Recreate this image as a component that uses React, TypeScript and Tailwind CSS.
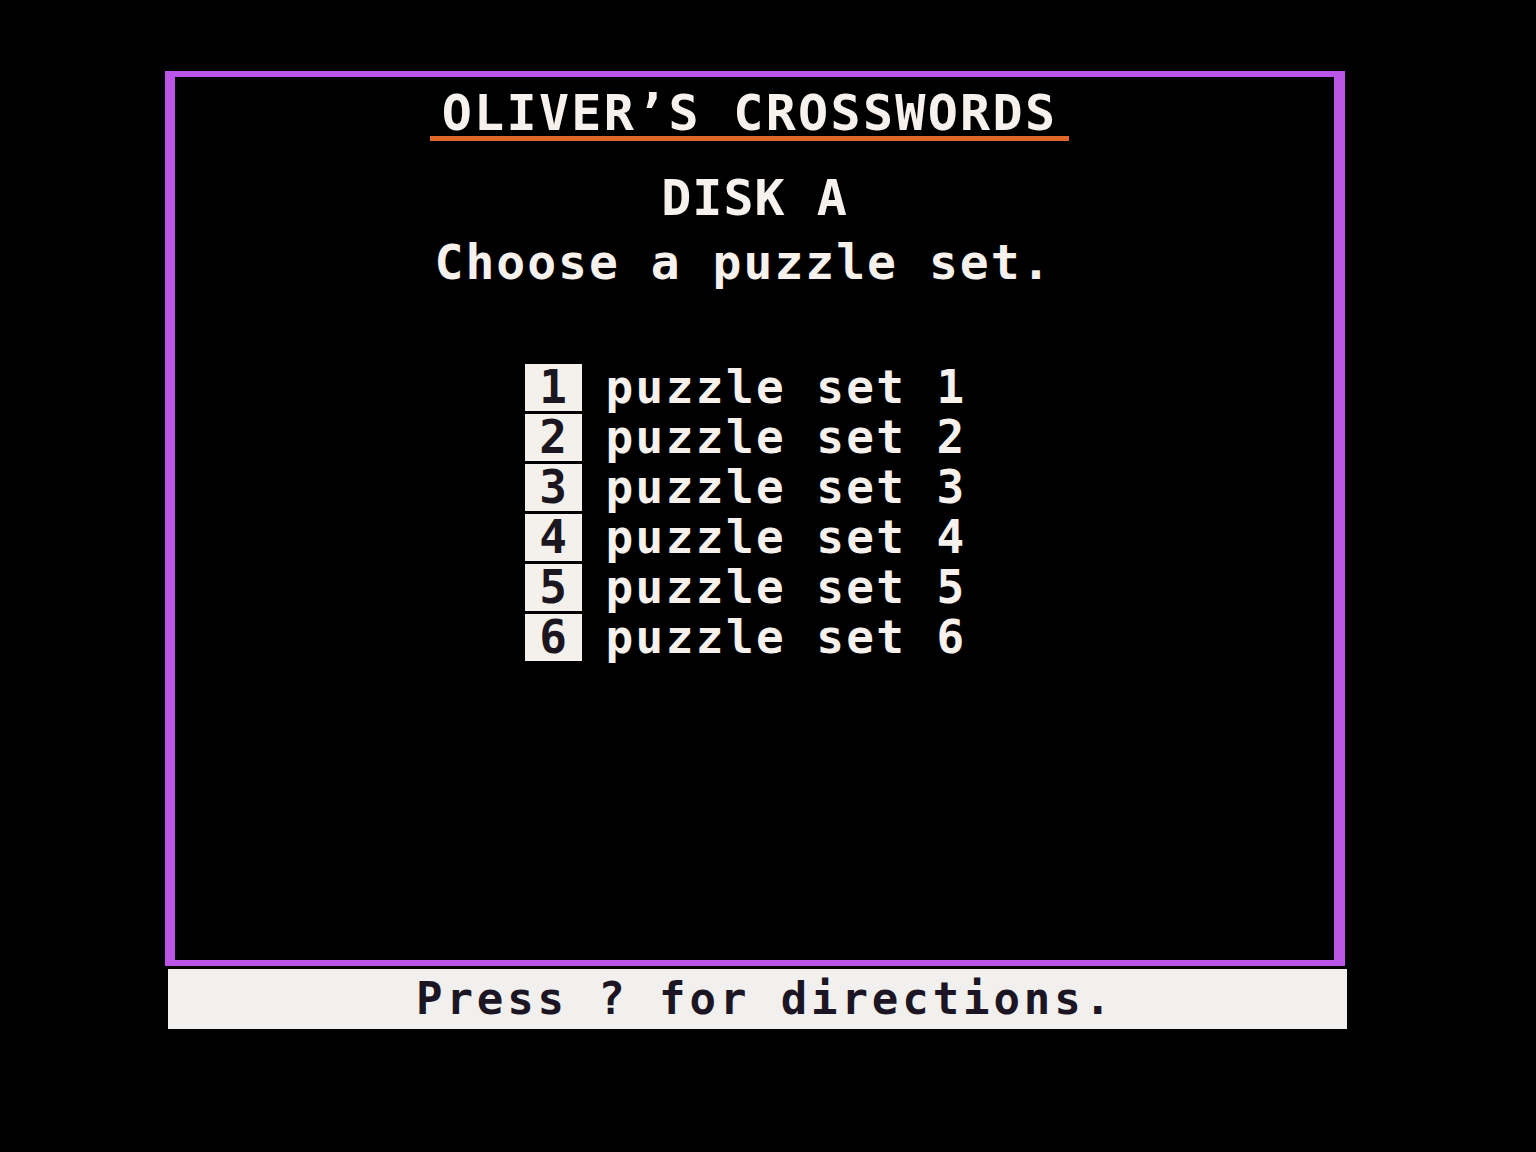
const SETS = [1, 2, 3, 4, 5, 6];

const MONO = "font-['DejaVu_Sans_Mono','Liberation_Mono',monospace] font-bold";

export default function App() {
  return (
    <div className="min-h-[1152px] w-[1536px] bg-black pt-[71px] pl-[165px]">
      {/* Screen frame */}
      <div className="flex h-[895px] w-[1180px] flex-col items-center border-t-[6px] border-b-[6px] border-l-[10px] border-r-[11px] border-[#bb55e8] pr-[10px] text-[#f6f1ec]">
        <h1
          className={`${MONO} mt-[13px] inline-block border-b-[5px] border-[#e2682a] px-[12px] text-[50px] leading-[46px] tracking-[2.3px]`}
        >
          OLIVER&rsquo;S CROSSWORDS
        </h1>
        <div className={`${MONO} mt-[32px] pl-[10px] text-[50px] leading-none tracking-[1px]`}>DISK A</div>
        <div className={`${MONO} mt-[15px] pr-[12px] text-[48px] leading-none tracking-[2px]`}>
          Choose a puzzle set.
        </div>

        {/* Puzzle set menu */}
        <div className="mt-[78px] flex w-[460px] flex-col gap-[3px] pl-[5px]">
          {SETS.map((n) => (
            <div key={n} className="flex h-[47px] items-center">
              <span
                className={`${MONO} flex h-[47px] w-[57px] items-center justify-center bg-[#f4f1ec] text-[46px] leading-[47px] text-[#1c1620]`}
              >
                {n}
              </span>
              <span className={`${MONO} ml-[24px] text-[46px] leading-[47px] tracking-[2.4px]`}>
                puzzle set {n}
              </span>
            </div>
          ))}
        </div>
      </div>

      {/* Status bar */}
      <div className="ml-[3px] mt-[3px] flex h-[60px] w-[1179px] items-center justify-center bg-[#f2f0ee] pl-[16px]">
        <span className={`${MONO} text-[44px] leading-[60px] tracking-[3.9px] text-[#1c1624]`}>
          Press ? for directions.
        </span>
      </div>
    </div>
  );
}
